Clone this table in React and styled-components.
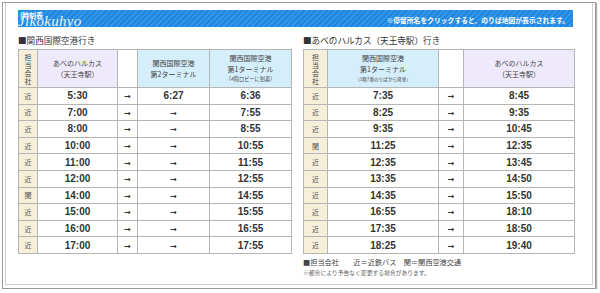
import React from "react";
import styled, {createGlobalStyle} from "styled-components";

const GlobalStyle = createGlobalStyle`
  body {
    margin: 0;
    background: #fff;
    font-family: "Noto Sans CJK JP", "Liberation Sans", sans-serif;
    color: #333;
  }
`

const Frame = styled.div`
  box-sizing: border-box;
  margin: 2px 0 0 2px;
  width: 594px;
  height: 287px;
  border: 1px solid #9a9a9a;
  box-shadow: 1px 1px 1px #b0b0b0;
  padding: 0 2px 3px 2px;
`

const Inner = styled.div`
  box-sizing: border-box;
  height: 100%;
  border: 1px solid #cfcfcf;
  border-top: none;
  padding: 7px 0 0 12px;
`

const Bar = styled.div`
  width: 555px;
  height: 17px;
  display: flex;
  justify-content: space-between;
  align-items: flex-end;
  overflow: hidden;
  background: repeating-linear-gradient(135deg, #3196ea 0 2px, #1f86de 2px 4px);
  color: #fff;
`

const BarTitle = styled.div`
  position: relative;
  width: 80px;
  height: 17px;
`

const SmallTitle = styled.span`
  position: absolute;
  left: 2px;
  top: 1px;
  font-size: 7px;
  line-height: 8px;
  font-weight: bold;
`

const ScriptTitle = styled.span`
  position: absolute;
  left: 0;
  top: 4px;
  font-family: "Liberation Serif", serif;
  font-style: italic;
  font-size: 15px;
  line-height: 15px;
  letter-spacing: 0.3px;
  color: rgba(255, 255, 255, 0.9);
`

const Notice = styled.span`
  font-size: 6.8px;
  line-height: 10px;
  font-weight: bold;
  padding: 0 4px 2px 0;
  white-space: nowrap;
`

const Columns = styled.div`
  display: flex;
  gap: 12px;
`

const Column = styled.div`
  width: ${p => p.$width}px;
`

const SectionTitle = styled.div`
  margin: 7px 0 3px;
  height: 12px;
  font-size: 8.6px;
  line-height: 12px;
  white-space: nowrap;
  color: #333;
`

const Table = styled.table`
  border-collapse: collapse;
  table-layout: fixed;
  width: 100%;
  border: 1px solid #a8a8a8;
`

const HeadCell = styled.td`
  height: 37px;
  padding: 0;
  border: 1px solid #b5b5b5;
  background: ${p => p.$bg || "#fff"};
  text-align: center;
  vertical-align: middle;
  font-size: 7px;
  line-height: 10.5px;
  color: #444;
`

const Tiny = styled.span`
  display: block;
  font-size: ${p => p.$size || 5.2}px;
  line-height: 10px;
  white-space: nowrap;
`

const Vertical = styled.div`
  font-size: 7px;
  line-height: 8px;
  color: #444;
`

const Cell = styled.td`
  height: 15.6px;
  padding: 0;
  border: 1px solid #b5b5b5;
  background: ${p => p.$company ? "#f6efd9" : "#fff"};
  text-align: center;
  vertical-align: middle;
  font-family: ${p => p.$company ? `"Noto Sans CJK JP", sans-serif` : `"Liberation Sans", sans-serif`};
  font-size: ${p => p.$company ? 7 : 10}px;
  font-weight: ${p => p.$company ? "normal" : "bold"};
  color: ${p => p.$company ? "#555" : "#333"};
`

const Arrow = styled.span`
  font-family: "DejaVu Sans", sans-serif;
  font-size: 8px;
  font-weight: bold;
  color: #333;
`

const Footer = styled.div`
  margin-top: 3px;
`

const FooterLine = styled.div`
  font-size: ${p => p.$small ? 5.8 : 7.2}px;
  line-height: ${p => p.$small ? 10 : 11}px;
  color: ${p => p.$small ? "#666" : "#444"};
  white-space: pre;
`

const BEIGE = "#f6efd9"
const LAVENDER = "#eeeafb"
const BLUE = "#d5eefb"

const toAirport = [
    ["近", "5:30", "6:27", "6:36"],
    ["近", "7:00", null, "7:55"],
    ["近", "8:00", null, "8:55"],
    ["近", "10:00", null, "10:55"],
    ["近", "11:00", null, "11:55"],
    ["近", "12:00", null, "12:55"],
    ["関", "14:00", null, "14:55"],
    ["近", "15:00", null, "15:55"],
    ["近", "16:00", null, "16:55"],
    ["近", "17:00", null, "17:55"],
]

const toHarukas = [
    ["近", "7:35", "8:45"],
    ["近", "8:25", "9:35"],
    ["近", "9:35", "10:45"],
    ["関", "11:25", "12:35"],
    ["近", "12:35", "13:45"],
    ["近", "13:35", "14:50"],
    ["近", "14:35", "15:50"],
    ["近", "16:55", "18:10"],
    ["近", "17:35", "18:50"],
    ["近", "18:25", "19:40"],
]

function CompanyHead() {
    return (
        <HeadCell $bg={BEIGE}>
            <Vertical>担<br/>当<br/>会<br/>社</Vertical>
        </HeadCell>
    )
}

function AirportTable() {
    return (
        <Table>
            <colgroup>
                <col style={{width: 19}}/>
                <col style={{width: 80}}/>
                <col style={{width: 20}}/>
                <col style={{width: 72}}/>
                <col style={{width: 82}}/>
            </colgroup>
            <thead>
            <tr>
                <CompanyHead/>
                <HeadCell $bg={LAVENDER}>あべのハルカス<br/>（天王寺駅）</HeadCell>
                <HeadCell/>
                <HeadCell $bg={BLUE}>関西国際空港<br/>第2ターミナル</HeadCell>
                <HeadCell $bg={BLUE}>
                    関西国際空港<br/>第1ターミナル
                    <Tiny>（4階ロビーに到着）</Tiny>
                </HeadCell>
            </tr>
            </thead>
            <tbody>
            {toAirport.map(([company, dep, t2, t1]) => (
                <tr key={dep}>
                    <Cell $company>{company}</Cell>
                    <Cell>{dep}</Cell>
                    <Cell><Arrow>→</Arrow></Cell>
                    <Cell>{t2 || <Arrow>→</Arrow>}</Cell>
                    <Cell>{t1}</Cell>
                </tr>
            ))}
            </tbody>
        </Table>
    )
}

function HarukasTable() {
    return (
        <Table>
            <colgroup>
                <col style={{width: 24}}/>
                <col style={{width: 111}}/>
                <col style={{width: 25}}/>
                <col style={{width: 111}}/>
            </colgroup>
            <thead>
            <tr>
                <CompanyHead/>
                <HeadCell $bg={BLUE}>
                    関西国際空港<br/>第1ターミナル
                    <Tiny $size={4.6}>（1階7番のりばから発車）</Tiny>
                </HeadCell>
                <HeadCell/>
                <HeadCell $bg={LAVENDER}>あべのハルカス<br/>（天王寺駅）</HeadCell>
            </tr>
            </thead>
            <tbody>
            {toHarukas.map(([company, dep, arr]) => (
                <tr key={dep}>
                    <Cell $company>{company}</Cell>
                    <Cell>{dep}</Cell>
                    <Cell><Arrow>→</Arrow></Cell>
                    <Cell>{arr}</Cell>
                </tr>
            ))}
            </tbody>
        </Table>
    )
}

export default function App() {
    return (
        <>
            <GlobalStyle/>
            <Frame>
                <Inner>
                    <Bar>
                        <BarTitle>
                            <SmallTitle>|時刻表</SmallTitle>
                            <ScriptTitle>Jikokuhyo</ScriptTitle>
                        </BarTitle>
                        <Notice>※停留所名をクリックすると、のりば地図が表示されます。</Notice>
                    </Bar>
                    <Columns>
                        <Column $width={273}>
                            <SectionTitle>■関西国際空港行き</SectionTitle>
                            <AirportTable/>
                        </Column>
                        <Column $width={271}>
                            <SectionTitle>■あべのハルカス（天王寺駅）行き</SectionTitle>
                            <HarukasTable/>
                            <Footer>
                                <FooterLine>{"■担当会社　　近＝近鉄バス　関＝関西空港交通"}</FooterLine>
                                <FooterLine $small>※都合により予告なく変更する場合があります。</FooterLine>
                            </Footer>
                        </Column>
                    </Columns>
                </Inner>
            </Frame>
        </>
    )
}
